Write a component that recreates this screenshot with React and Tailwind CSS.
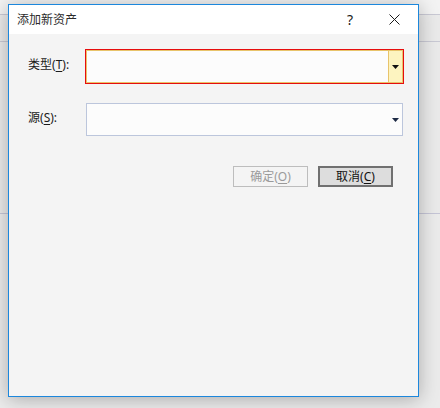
import React from "react";

const font = { fontFamily: '"Noto Sans", "Noto Sans CJK SC", sans-serif' };

// Small down-pointing arrow used by the combo boxes
const Caret = ({ color }) => (
  <svg width="7" height="4" viewBox="0 0 7 4" className="block">
    <path d="M0 0H7L3.5 4Z" fill={color} />
  </svg>
);

const Label = ({ text, hotkey }) => (
  <div className="w-[76px] pl-[19px] pb-[4px] text-[12px] text-[#1b1b1b] leading-none">
    {text}(<span className="underline underline-offset-2">{hotkey}</span>):
  </div>
);

const App = () => {
  return (
    <div
      className="relative w-[440px] h-[408px] overflow-hidden bg-[#ebebeb]"
      style={font}
    >
      {/* page behind the dialog */}
      <div className="h-[15px] bg-[#f3f3f3] border-b border-[#c9c9d4]" />
      <div className="h-[27px] bg-[#eaeaea] border-b border-[#c9c9d4]" />
      <div className="h-[172px] bg-[#eaeaea] border-b border-[#c5c5d6]" />

      {/* dialog */}
      <div className="absolute left-[8px] top-[4px] w-[411px] h-[393px] flex flex-col border border-[#1c87dc] bg-[#f4f4f4] shadow-[0_2px_18px_rgba(0,0,0,0.28)]">
        {/* title bar */}
        <div className="h-[29px] shrink-0 bg-white flex items-center pl-[8px]">
          <span className="text-[12px] text-[#2b2b2b]">添加新资产</span>
          <span className="ml-auto mr-[36px] text-[14px] text-[#1b1b1b] leading-none">?</span>
          <svg width="11" height="11" viewBox="0 0 11 11" className="mr-[18px]">
            <path d="M0.5 0.5L10.5 10.5M10.5 0.5L0.5 10.5" stroke="#1b1b1b" strokeWidth="1" />
          </svg>
        </div>

        {/* form */}
        <div className="flex flex-col pt-[15px] pr-[14px]">
          <div className="flex items-center">
            <Label text="类型" hotkey="T" />
            <div className="flex-1 h-[35px] border border-[#e60d0d] flex">
              <div className="flex-1 flex border border-[#e8c46b] bg-[#fcfcfc]">
                <div className="flex-1" />
                <div className="w-[14px] bg-[#fdf4c0] border-l border-[#e8c46b] flex items-center justify-center">
                  <Caret color="#111111" />
                </div>
              </div>
            </div>
          </div>

          <div className="flex items-center mt-[19px]">
            <Label text="源" hotkey="S" />
            <div className="flex-1 ml-[1px] mr-[1px] h-[33px] border border-[#bcc6dc] bg-[#fcfcfc] flex items-center justify-end pr-[3px]">
              <Caret color="#1d2a45" />
            </div>
          </div>

          <div className="flex justify-end gap-[10px] mt-[30px] pr-[11px]">
            <div className="w-[75px] h-[21px] border border-[#bdbdbd] bg-[#f4f4f4] flex items-center justify-center text-[12px] text-[#9a9a9a]">
              确定(<span className="underline underline-offset-2">O</span>)
            </div>
            <div className="w-[75px] h-[21px] border-2 border-[#707070] bg-[#dddddd] flex items-center justify-center text-[12px] text-[#111111]">
              取消(<span className="underline underline-offset-2">C</span>)
            </div>
          </div>
        </div>
      </div>
    </div>
  );
};

export default App;
